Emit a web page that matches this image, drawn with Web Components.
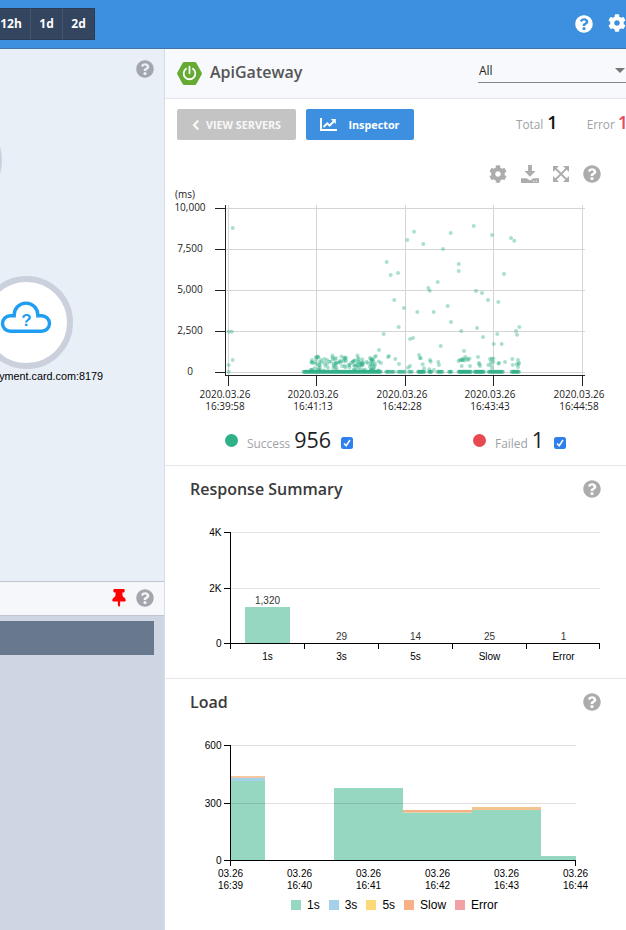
<!DOCTYPE html>
<html lang="en">
<head>
<meta charset="utf-8">
<title>ApiGateway</title>
<style>
  html, body { margin: 0; height: 100%; overflow: hidden; background: #fff; }
  body { font-family: "Open Sans", "Noto Sans", sans-serif; color: #333; }
</style>
</head>
<body>
<apm-app></apm-app>

<script>
const ICONS = {
  help: ['0 0 512 512', '<path d="M504 256c0 136.997-111.043 248-248 248S8 392.997 8 256C8 119.083 119.043 8 256 8s248 111.083 248 248zM262.655 90c-54.497 0-89.255 22.957-116.549 63.758-3.536 5.286-2.353 12.415 2.715 16.258l34.699 26.31c5.205 3.947 12.621 3.008 16.665-2.122 17.864-22.658 30.113-35.797 57.303-35.797 20.429 0 45.698 13.148 45.698 32.958 0 14.976-12.363 22.667-32.534 33.976C247.128 238.528 216 254.941 216 296v4c0 6.627 5.373 12 12 12h56c6.627 0 12-5.373 12-12v-1.333c0-28.462 83.186-29.647 83.186-106.667 0-58.002-60.165-102-116.531-102zM256 338c-25.365 0-46 20.635-46 46 0 25.364 20.635 46 46 46s46-20.636 46-46c0-25.365-20.635-46-46-46z"/>'],
  cog: ['0 0 512 512', '<path d="M487.4 315.7l-42.6-24.6c4.3-23.2 4.3-47 0-70.2l42.6-24.6c4.9-2.8 7.1-8.6 5.5-14-11.1-35.6-30-67.8-54.7-94.6-3.8-4.1-10-5.1-14.8-2.3L380.8 110c-17.9-15.4-38.5-27.3-60.8-35.1V25.8c0-5.6-3.9-10.5-9.4-11.7-36.7-8.2-74.3-7.8-109.2 0-5.5 1.2-9.4 6.1-9.4 11.7V75c-22.2 7.9-42.8 19.8-60.8 35.1L88.7 85.5c-4.9-2.8-11-1.9-14.8 2.3-24.7 26.7-43.6 58.9-54.7 94.6-1.7 5.4.6 11.2 5.5 14L67.3 221c-4.3 23.2-4.3 47 0 70.2l-42.6 24.6c-4.9 2.8-7.1 8.6-5.5 14 11.1 35.6 30 67.8 54.7 94.6 3.8 4.1 10 5.1 14.8 2.3l42.6-24.6c17.9 15.4 38.5 27.3 60.8 35.1v49.2c0 5.6 3.9 10.5 9.4 11.7 36.7 8.2 74.3 7.8 109.2 0 5.5-1.2 9.4-6.1 9.4-11.7v-49.2c22.2-7.9 42.8-19.8 60.8-35.1l42.6 24.6c4.9 2.8 11 1.9 14.8-2.3 24.7-26.7 43.6-58.9 54.7-94.6 1.5-5.5-.7-11.3-5.6-14.1zM256 336c-44.1 0-80-35.9-80-80s35.9-80 80-80 80 35.9 80 80-35.9 80-80 80z"/>'],
  download: ['0 0 18 18', '<path d="M7.1 0h3.8v6h3.7L9 11.8 3.4 6h3.7z"/><path d="M0 13.2h5.6L9 15.4l3.4-2.2H18V18H0z"/><path d="M12 16.2h1.2M14.7 16.2h1.2" stroke="#fff" stroke-width="1.1"/>'],
  expand: ['0 0 16 16', '<path d="M2 2l12 12M14 2L2 14" stroke="currentColor" stroke-width="1.8"/><path d="M0 0h6L4.2 1.8 1.8 4.2 0 6zM16 0v6l-1.8-1.8-2.4-2.4L10 0zM0 16v-6l1.8 1.8 2.4 2.4L6 16zM16 16h-6l1.8-1.8 2.4-2.4L16 10z"/>'],
  pin: ['0 0 384 512', '<path d="M298.028 214.267L285.793 96H328c13.255 0 24-10.745 24-24V24c0-13.255-10.745-24-24-24H56C42.745 0 32 10.745 32 24v48c0 13.255 10.745 24 24 24h42.207L85.972 214.267C37.465 236.82 0 277.261 0 328c0 13.255 10.745 24 24 24h136v104.007c0 1.242.289 2.467.845 3.578l24 48c2.941 5.882 11.364 5.893 14.311 0l24-48a8.008 8.008 0 0 0 .845-3.578V352h136c13.255 0 24-10.745 24-24-.001-51.183-37.983-91.42-85.973-113.733z"/>'],
  back: ['0 0 8 12', '<path d="M6.3 1.5L2 6l4.3 4.5" fill="none" stroke="currentColor" stroke-width="2.3"/>'],
  chart: ['0 0 17 13', '<path d="M1 0v12h16" fill="none" stroke="currentColor" stroke-width="1.9"/><path d="M3.5 9l3.8-3.6 2.3 2.3 4-4.2" fill="none" stroke="currentColor" stroke-width="1.9"/><path d="M10.8 1h5v5z"/>'],
  spring: ['0 0 24 22', '<path fill="#64aa33" d="M7 0h10q1 0 1.6 1L23.6 10q.6 1 0 2l-5 9q-.6 1-1.6 1H7q-1 0-1.6-1L.4 12q-.6-1 0-2l5-9Q6 0 7 0z"/><path d="M8.7 6.4a5.6 5.6 0 1 0 6.6 0M12 4.4v6.4" fill="none" stroke="#fff" stroke-width="1.7" stroke-linecap="round"/>'],
  cloud: ['0 0 52 33', '<path d="M10.3 30.3h31.4a7.8 7.8 0 0 0 0-15.6h-3.9V13.9a11.8 11.8 0 0 0-23.6 0v.8h-3.9a7.8 7.8 0 0 0 0 15.6z" fill="none" stroke="currentColor" stroke-width="3.4"/>'],
};

const define = (tag, html, setup) => {
  customElements.define(tag, class extends HTMLElement {
    constructor() {
      super();
      const template = document.createElement('template');
      template.innerHTML = html;
      this.attachShadow({ mode: 'open' }).append(template.content.cloneNode(true));
    }

    connectedCallback() {
      if (setup) {
        setup(this, this.shadowRoot);
      }
    }
  });
};

const line = (x1, y1, x2, y2, cls) => `<path class="${cls}" d="M${x1} ${y1}L${x2} ${y2}"/>`;
const text = (x, y, value, cls = '') => `<text x="${x}" y="${y}" class="${cls}">${value}</text>`;
const twoLines = (x, y, first, second) =>
  `<text x="${x}" y="${y}">${first}<tspan x="${x}" dy="12">${second}</tspan></text>`;
const rect = (x, y, w, h, fill) => `<rect x="${x}" y="${y}" width="${w}" height="${h}" fill="${fill}"/>`;

define('apm-icon', `
  <style>
    :host { display: block; flex: none; color: inherit; }
    svg { display: block; width: 100%; height: 100%; fill: currentColor; }
  </style>
  <svg></svg>
`, (host, root) => {
  const [viewBox, body] = ICONS[host.getAttribute('name')];
  const svg = root.querySelector('svg');
  svg.setAttribute('viewBox', viewBox);
  svg.innerHTML = body;
});

define('apm-topbar', `
  <style>
    :host { display: flex; justify-content: space-between; box-sizing: border-box; height: 49px; background: #3d90e0; border-bottom: 1px solid #4674a8; }
    .periods { display: flex; padding-top: 8px; }
    .periods span { box-sizing: border-box; width: 32px; height: 32px; background: #34455f; border: solid #2b3c56; border-width: 1px 0; border-right: 1px solid #46566e; color: #fff; font-size: 12px; font-weight: 700; line-height: 30px; text-align: center; }
    .periods span:first-child { width: 31px; padding-right: 8px; }
    .periods span:last-child { border-right-color: #2b3c56; }
    .actions { display: flex; gap: 15px; color: #fff; padding-top: 15px; }
    apm-icon { width: 18px; height: 18px; }
    .cog { margin-top: -1px; }
  </style>
  <div class="periods"><span>12h</span><span>1d</span><span>2d</span></div>
  <div class="actions"><apm-icon name="help"></apm-icon><apm-icon class="cog" name="cog"></apm-icon></div>
`);

define('apm-server-map', `
  <style>
    :host { display: block; position: relative; height: 532px; background: #e8eff7; overflow: hidden; }
    .help { position: absolute; right: 10px; top: 11px; width: 18px; height: 18px; color: #a3a7ad; }
    .node { position: absolute; box-sizing: border-box; width: 93px; height: 93px; border: 6.5px solid #cbd1dc; border-radius: 50%; background: #fff; }
    .main { left: -20px; top: 227px; color: #1e9df1; }
    .main apm-icon { width: 52px; height: 33px; margin: 19px 0 0 13.5px; }
    .mark { position: absolute; left: 0; right: 0; top: 26px; text-align: center; font: 700 17px/26px "Liberation Sans", sans-serif; }
    .label { position: absolute; right: 61px; top: 320px; font: 10.8px/14px "Liberation Sans", sans-serif; color: #000; }
    .side { left: -91px; top: 65px; }
  </style>
  <apm-icon class="help" name="help"></apm-icon>
  <div class="node side"></div>
  <div class="node main"><apm-icon name="cloud"></apm-icon><span class="mark">?</span></div>
  <span class="label">yment.card.com:8179</span>
`);

define('apm-server-list', `
  <style>
    :host { display: flex; flex-direction: column; flex: 1; background: #ced6e4; }
    header { display: flex; align-items: center; justify-content: flex-end; gap: 10px; box-sizing: border-box; height: 35px; padding: 0 10px 1px 0; background: #f5f7fb; border: solid #bfc6cf; border-width: 1px 0; }
    .pin { width: 14px; height: 18px; color: #f00; }
    .help { width: 18px; height: 18px; color: #a3a7ad; }
    .row { height: 34px; margin: 5px 10px 0 0; background: #69798d; }
  </style>
  <header><apm-icon class="pin" name="pin"></apm-icon><apm-icon class="help" name="help"></apm-icon></header>
  <div class="row"></div>
`);

define('apm-section', `
  <style>
    :host { display: block; box-sizing: border-box; height: 213px; border-bottom: 1px solid #e6e9ec; }
    header { display: flex; align-items: center; justify-content: space-between; height: 46px; padding: 0 25px; }
    h2 { margin: 0; font-size: 16px; font-weight: 600; color: #3a3a3a; }
    apm-icon { width: 18px; height: 18px; color: #acacac; }
  </style>
  <header><h2></h2><apm-icon name="help"></apm-icon></header>
  <slot></slot>
`, (host, root) => {
  root.querySelector('h2').textContent = host.getAttribute('label');
});

define('apm-target', `
  <style>
    :host { display: block; }
    .title { display: flex; align-items: center; box-sizing: border-box; height: 50px; padding-left: 12px; background: #f8f9fd; border-bottom: 1px solid #e4e5e9; }
    .title apm-icon { width: 25px; height: 23px; margin-top: -1px; }
    h1 { flex: 1; margin: -3px 0 0 8px; font-size: 16px; font-weight: 600; color: #555; }
    .select { display: flex; flex: none; justify-content: space-between; align-items: center; box-sizing: border-box; width: 148px; height: 24px; margin-top: -5px; padding-left: 1px; border-bottom: 1px solid #85878a; font-size: 12px; color: #222; }
    .select i { border: 5px solid transparent; border-top-color: #777; border-bottom: 0; margin-right: 1px; }
    .bar { display: flex; align-items: center; box-sizing: border-box; height: 52px; padding: 0 0 1px 12px; }
    button { display: flex; flex: none; align-items: center; justify-content: center; box-sizing: border-box; height: 31px; padding: 0; border: 0; border-radius: 2px; color: #fff; font: 700 10.8px "Open Sans", sans-serif; }
    .view { width: 119px; gap: 6px; background: #c4c4c4; color: #f8f8f8; }
    .view apm-icon { width: 8px; height: 12px; }
    .inspect { width: 108px; margin-left: 10px; gap: 11px; background: #3d90e0; }
    .inspect apm-icon { width: 17px; height: 13px; }
    .count { display: flex; flex: none; align-items: baseline; gap: 4px; margin: -6px 0 0 102px; font-size: 11.8px; color: #a0a2a6; }
    .count + .count { margin-left: 29px; }
    b { font-size: 18px; font-weight: 600; color: #111; }
    .error b { margin-left: -1px; color: #e8475d; }
  </style>
  <div class="title">
    <apm-icon name="spring"></apm-icon><h1>ApiGateway</h1>
    <div class="select"><span>All</span><i></i></div>
  </div>
  <div class="bar">
    <button class="view"><apm-icon name="back"></apm-icon><span>VIEW SERVERS</span></button>
    <button class="inspect"><apm-icon name="chart"></apm-icon><span>Inspector</span></button>
    <div class="count"><span>Total</span><b>1</b></div>
    <div class="count error"><span>Error</span><b>1</b></div>
  </div>
`);

// Slow transactions, plotted one by one.
const SLOW = [
  67.7,48, 63.7,151.7, 66.7,151.7, 67.7,180, 63.7,185, 63.7,191.7, 221.7,82, 225.7,95, 233,93, 229.3,120,
  233.7,147, 218.7,154, 214,170, 216,183, 223,177, 224,176, 230.3,179, 234,184, 249,51.7, 242.3,60, 258.3,64,
  285.7,53, 278,69, 308.7,46, 327,55, 346,58, 349.3,60.7, 293.7,84, 293.7,91, 339,94, 272.7,102, 263.3,108,
  264.7,110.7, 311,111, 317,113, 323,120, 333.3,122, 239,128, 252.3,132, 268.7,132, 282.7,126, 286,142,
  296.3,151, 312,148, 318,157, 332.3,154, 328.7,164, 336.7,164, 354.3,147, 351,151, 352,154.7, 245,159,
  248,158, 275.7,166, 299,171, 254,175, 255,178, 255.7,178.3, 257.7,184.3, 265,180, 265.7,181.7, 273.3,182,
  274,185, 264.3,189.3, 269,190, 243,187.7, 245,186, 259,188.3, 293.5,181, 295,180, 296,180, 297,180, 298,180,
  298.3,178.5, 299.5,180.5, 300.5,177, 302,179, 303,180, 304.5,178.5, 305,186, 296.7,186, 313,177, 314,183,
  314.3,184.3, 315,186, 325,179, 326.7,178.7, 328.3,178.5, 328.3,181.7, 326,182, 326,185, 327,188, 323.3,185,
  334,183, 333.5,183.5, 340,182, 347.3,179, 353,180, 354,183, 353.5,184, 351.7,184.3, 347.7,185, 353,187,
  147,180, 148,183, 146.5,182.5, 151,177, 152,177, 153,176.5, 153.5,177.5, 154.5,182, 159.5,179, 167.5,175.5,
  167.5,177.5, 168,179, 170,179.5, 171,178, 162,180, 176.5,176.5, 179,178, 180,177.5, 181,178, 192.5,175.5,
  193,178, 205,178, 206,179, 207,180, 209.5,177, 211,176,
];

// Runs of fast transactions that sit on the zero line.
const FAST = [
  [138.5, 216, 140], [221, 224, 5], [225.5, 229, 5], [233, 240, 8], [244, 247, 4], [253, 259.5, 14], [264, 266.5, 6],
  [272.5, 277.5, 8], [284, 286.5, 5], [293.5, 306, 26], [309.5, 319, 20], [323.5, 338, 24], [346.5, 354, 14],
];

define('apm-scatter', `
  <style>
    :host { display: block; box-sizing: border-box; height: 315px; padding-top: 14px; border-bottom: 1px solid #e6e9ec; }
    .tools { display: flex; justify-content: flex-end; align-items: center; gap: 14px; height: 18px; padding-right: 25px; color: #acacac; }
    .tools apm-icon { width: 18px; height: 18px; }
    .tools .expand { width: 16px; height: 16px; }
    svg { display: block; margin-top: -3px; font: 10px "Open Sans", sans-serif; fill: #222; text-anchor: middle; }
    .grid { stroke: #d5d5d5; }
    .axis { stroke: #222; }
    .dots { fill: #2eb088; fill-opacity: .4; }
    .legend { display: flex; height: 38px; align-items: center; padding-left: 60px; }
    .item { display: flex; flex: none; align-items: baseline; width: 248px; font-size: 11.9px; color: #a0a2a6; }
    .item i { width: 13px; height: 13px; margin-right: 9px; border-radius: 50%; background: #2eb088; }
    .item.failed i { background: #e8484f; }
    .item b { margin: 0 10px 0 4px; font-size: 21.5px; line-height: 28px; font-weight: 400; color: #222; }
    .item span, .item b { position: relative; top: 1px; }
    .item svg { width: 12px; height: 12px; margin: 0; align-self: center; position: relative; top: 4px; }
  </style>
  <div class="tools">
    <apm-icon name="cog"></apm-icon><apm-icon name="download"></apm-icon>
    <apm-icon class="expand" name="expand"></apm-icon><apm-icon name="help"></apm-icon>
  </div>
  <svg class="plot" width="461" height="240"></svg>
  <div class="legend"></div>
`, (host, root) => {
  let out = text(20, 18, '(ms)');
  ['10,000', '7,500', '5,000', '2,500', '0'].forEach((label, i) => {
    const y = 28.5 + i * 41;
    out += line(60, y, 420, y, 'grid') + line(50, y, 60, y, 'axis') + text(25, y + 2.5, label);
  });
  ['16:39:58', '16:41:13', '16:42:28', '16:43:43', '16:44:58'].forEach((label, i) => {
    const x = [63.5, 151.5, 240.5, 328.5, 417.5][i];
    out += line(x, 25, x, 195, 'grid') + line(x, 196, x, 206, 'axis');
    out += twoLines(x - 3.5, 218, '2020.03.26', label);
  });
  out += line(60.5, 25, 60.5, 196, 'axis') + line(60, 195.5, 420, 195.5, 'axis');

  // fixed seed, so the cloud looks the same on every load
  let seed = 7;
  const random = () => {
    seed = (seed * 16807) % 2147483647;
    return seed / 2147483647;
  };
  const dot = (x, y) => `<circle cx="${x.toFixed(1)}" cy="${y.toFixed(1)}" r="2"/>`;
  let dots = '';
  for (let i = 0; i < SLOW.length; i += 2) {
    dots += dot(SLOW[i], SLOW[i + 1]);
  }
  for (let i = 0; i < 95; i++) {
    dots += dot(146 + random() * 68, 179 + random() * 12);
  }
  FAST.forEach(([from, to, count]) => {
    for (let i = 0; i < count; i++) {
      dots += dot(from + ((to - from) * i) / (count - 1), 191.8);
    }
  });
  root.querySelector('.plot').innerHTML = out + `<g class="dots">${dots}</g>`;

  root.querySelector('.legend').innerHTML = [['Success', '956', ''], ['Failed', '1', 'failed']].map(([label, value, cls]) => `
    <div class="item ${cls}"><i></i><span>${label}</span><b>${value}</b>
      <svg viewBox="0 0 12 12"><rect width="12" height="12" rx="2.5" fill="#2f80ed"/><path d="M3 6.4l2.2 2.3L9 3" fill="none" stroke="#fff" stroke-width="1.5"/></svg>
    </div>`).join('');
});

const CHART_STYLE = `
  :host { display: block; }
  svg { display: block; font: 10px "Liberation Sans", sans-serif; fill: #000; text-anchor: middle; }
  .grid { stroke: #e3e3e3; }
  .axis { stroke: #000; }
  .end { text-anchor: end; }
  .value { fill: #333; }
`;

define('apm-response-summary', `<style>${CHART_STYLE}</style><svg width="461" height="160"></svg>`, (host, root) => {
  let out = '';
  [['4K', 20.5], ['2K', 76.5], ['0', 131.5]].forEach(([label, y]) => {
    out += line(65, y, 434.5, y, y > 100 ? 'axis' : 'grid') + line(59, y, 65, y, 'axis') + text(56.5, y + 3.5, label, 'end');
  });
  out += rect(80, 95, 45, 36, '#96d7c1');
  [['1s', '1,320'], ['3s', '29'], ['5s', '14'], ['Slow', '25'], ['Error', '1']].forEach(([label, value], i) => {
    const x = 102.5 + i * 74;
    out += text(x, i ? 128 : 92, value, 'value') + text(x, 148, label);
  });
  [65.5, 139.5, 213.5, 287.5, 361.5, 434.5].forEach((x) => {
    out += line(x, 131, x, 137, 'axis');
  });
  root.querySelector('svg').innerHTML = out + line(65.5, 20, 65.5, 137, 'axis');
});

define('apm-load', `
  <style>
    ${CHART_STYLE}
    svg { margin-top: -5px; }
    .grid { stroke: #000; stroke-opacity: .12; }
    .legend { display: flex; margin: 4px 0 0 126px; font: 12px/14px "Liberation Sans", sans-serif; color: #000; }
    .legend span { display: flex; align-items: center; gap: 6px; margin-right: 9px; }
    .legend i { width: 10px; height: 10px; }
  </style>
  <svg width="461" height="174"></svg>
  <div class="legend"></div>
`, (host, root) => {
  const green = '#96d7c1';
  const blue = '#a5d0ea';
  const orange = '#f3c490';
  let out = rect(65, 61, 35, 79, green) + rect(65, 58, 35, 3, blue) + rect(65, 56, 35, 2, '#f3c8a0');
  out += rect(169, 68, 69, 72, green);
  out += rect(238, 93, 69, 47, green) + rect(238, 92, 69, 1, '#e3d3b4') + rect(238, 90, 69, 2, '#f4b183');
  out += rect(307, 90, 69, 50, green) + rect(307, 87, 69, 3, orange);
  out += rect(376, 136, 35, 4, green);
  [['600', 25.5], ['300', 83.5], ['0', 140.5]].forEach(([label, y]) => {
    out += line(65, y, 411, y, y > 100 ? 'axis' : 'grid') + line(59, y, 65, y, 'axis') + text(56.5, y + 3.5, label, 'end');
  });
  for (let i = 0; i < 6; i++) {
    out += twoLines(65.5 + i * 69, 157, '03.26', `16:${39 + i}`);
  }
  out += line(65.5, 25, 65.5, 146, 'axis') + line(410.5, 140, 410.5, 146, 'axis');
  root.querySelector('svg').innerHTML = out;

  root.querySelector('.legend').innerHTML = [['1s', green], ['3s', blue], ['5s', '#fdd876'], ['Slow', '#f8b184'], ['Error', '#f1a0a4']]
    .map(([label, color]) => `<span><i style="background:${color}"></i>${label}</span>`).join('');
});

define('apm-app', `
  <style>
    :host { display: flex; flex-direction: column; width: 626px; height: 930px; overflow: hidden; }
    main { display: flex; flex: 1; min-height: 0; }
    .left { display: flex; flex-direction: column; box-sizing: border-box; width: 165px; border-right: 1px solid #d6dde6; }
    .right { width: 461px; overflow: hidden; background: #fff; }
    .last { border-bottom: 0; height: 252px; }
  </style>
  <apm-topbar></apm-topbar>
  <main>
    <div class="left"><apm-server-map></apm-server-map><apm-server-list></apm-server-list></div>
    <div class="right">
      <apm-target></apm-target>
      <apm-scatter></apm-scatter>
      <apm-section label="Response Summary"><apm-response-summary></apm-response-summary></apm-section>
      <apm-section class="last" label="Load"><apm-load></apm-load></apm-section>
    </div>
  </main>
`);
</script>
</body>
</html>
